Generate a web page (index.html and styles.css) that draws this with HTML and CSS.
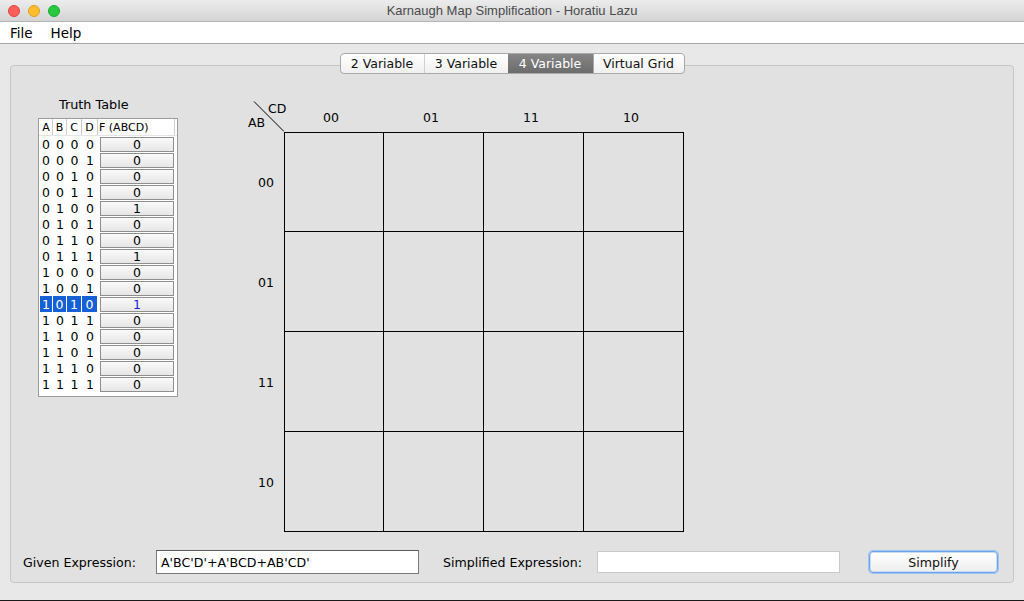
FILE: index.html
```html
<!DOCTYPE html>
<html>
<head>
<meta charset="utf-8">
<link rel="stylesheet" href="styles.css">
</head>
<body>
<div class="window">
  <div class="titlebar">
    <div class="lights">
      <span class="light red"></span>
      <span class="light yellow"></span>
      <span class="light green"></span>
    </div>
    <div class="title">Karnaugh Map Simplification - Horatiu Lazu</div>
  </div>
  <div class="menubar">
    <span class="menu">File</span>
    <span class="menu">Help</span>
  </div>
  <div class="content">
    <div class="tabs">
      <span class="tab">2 Variable</span>
      <span class="tab sep">3 Variable</span>
      <span class="tab active">4 Variable</span>
      <span class="tab">Virtual Grid</span>
    </div>
    <div class="panel">
      <div class="main">
        <div class="tt-section">
          <div class="tt-title">Truth Table</div>
          <div class="tt-box">
            <div class="tt-row tt-head">
              <span class="c a">A</span><span class="c b">B</span><span class="c cc">C</span><span class="c d">D</span><span class="c f">F (ABCD)</span>
            </div>
            <div class="tt-row"><span class="c a">0</span><span class="c b">0</span><span class="c cc">0</span><span class="c d">0</span><span class="c f"><span class="val">0</span></span></div>
            <div class="tt-row"><span class="c a">0</span><span class="c b">0</span><span class="c cc">0</span><span class="c d">1</span><span class="c f"><span class="val">0</span></span></div>
            <div class="tt-row"><span class="c a">0</span><span class="c b">0</span><span class="c cc">1</span><span class="c d">0</span><span class="c f"><span class="val">0</span></span></div>
            <div class="tt-row"><span class="c a">0</span><span class="c b">0</span><span class="c cc">1</span><span class="c d">1</span><span class="c f"><span class="val">0</span></span></div>
            <div class="tt-row"><span class="c a">0</span><span class="c b">1</span><span class="c cc">0</span><span class="c d">0</span><span class="c f"><span class="val">1</span></span></div>
            <div class="tt-row"><span class="c a">0</span><span class="c b">1</span><span class="c cc">0</span><span class="c d">1</span><span class="c f"><span class="val">0</span></span></div>
            <div class="tt-row"><span class="c a">0</span><span class="c b">1</span><span class="c cc">1</span><span class="c d">0</span><span class="c f"><span class="val">0</span></span></div>
            <div class="tt-row"><span class="c a">0</span><span class="c b">1</span><span class="c cc">1</span><span class="c d">1</span><span class="c f"><span class="val">1</span></span></div>
            <div class="tt-row"><span class="c a">1</span><span class="c b">0</span><span class="c cc">0</span><span class="c d">0</span><span class="c f"><span class="val">0</span></span></div>
            <div class="tt-row"><span class="c a">1</span><span class="c b">0</span><span class="c cc">0</span><span class="c d">1</span><span class="c f"><span class="val">0</span></span></div>
            <div class="tt-row sel"><span class="c a">1</span><span class="c b">0</span><span class="c cc">1</span><span class="c d">0</span><span class="c f"><span class="val">1</span></span></div>
            <div class="tt-row"><span class="c a">1</span><span class="c b">0</span><span class="c cc">1</span><span class="c d">1</span><span class="c f"><span class="val">0</span></span></div>
            <div class="tt-row"><span class="c a">1</span><span class="c b">1</span><span class="c cc">0</span><span class="c d">0</span><span class="c f"><span class="val">0</span></span></div>
            <div class="tt-row"><span class="c a">1</span><span class="c b">1</span><span class="c cc">0</span><span class="c d">1</span><span class="c f"><span class="val">0</span></span></div>
            <div class="tt-row"><span class="c a">1</span><span class="c b">1</span><span class="c cc">1</span><span class="c d">0</span><span class="c f"><span class="val">0</span></span></div>
            <div class="tt-row"><span class="c a">1</span><span class="c b">1</span><span class="c cc">1</span><span class="c d">1</span><span class="c f"><span class="val">0</span></span></div>
          </div>
        </div>
        <div class="kmap">
          <div class="corner">
            <svg class="diag" width="46" height="34" viewBox="0 0 46 34"><line x1="16" y1="3.5" x2="46" y2="33.5" stroke="#000" stroke-width="1"/></svg>
            <span class="lbl-cd">CD</span>
            <span class="lbl-ab">AB</span>
          </div>
          <div class="colhead">00</div>
          <div class="colhead">01</div>
          <div class="colhead">11</div>
          <div class="colhead">10</div>
          <div class="rowhead">00</div>
          <div class="cell t l"></div><div class="cell t"></div><div class="cell t"></div><div class="cell t"></div>
          <div class="rowhead">01</div>
          <div class="cell l"></div><div class="cell"></div><div class="cell"></div><div class="cell"></div>
          <div class="rowhead">11</div>
          <div class="cell l"></div><div class="cell"></div><div class="cell"></div><div class="cell"></div>
          <div class="rowhead">10</div>
          <div class="cell l"></div><div class="cell"></div><div class="cell"></div><div class="cell"></div>
        </div>
      </div>
      <div class="bottom">
        <label class="lbl lbl-given">Given Expression:</label>
        <div class="input given">A'BC'D'+A'BCD+AB'CD'</div>
        <label class="lbl lbl-simp">Simplified Expression:</label>
        <div class="input simp"></div>
        <button class="btn">Simplify</button>
      </div>
    </div>
  </div>
</div>
</body>
</html>
```

FILE: styles.css
```css
* { box-sizing: border-box; }
html, body { margin: 0; padding: 0; }
body {
  width: 1024px;
  height: 601px;
  overflow: hidden;
  background: #e8e8e8;
  font-family: "DejaVu Sans", Verdana, sans-serif;
  font-size: 12px;
  color: #000;
}
.window {
  width: 1024px;
  height: 601px;
  display: flex;
  flex-direction: column;
  border-bottom: 1px solid #1a1a1a;
}
.titlebar {
  height: 22px;
  flex: none;
  position: relative;
  background: linear-gradient(#ececec, #d4d4d4);
  border-bottom: 1px solid #b4b4b4;
  display: flex;
  align-items: center;
  justify-content: center;
}
.lights {
  position: absolute;
  left: 8px;
  top: 5px;
  display: flex;
  gap: 8px;
}
.light {
  width: 12px;
  height: 12px;
  border-radius: 50%;
  display: block;
}
.red { background: #fc5f57; border: 1px solid #e0443e; }
.yellow { background: #fdbc2e; border: 1px solid #dea123; }
.green { background: #28c840; border: 1px solid #1aab29; }
.title {
  font-family: "Liberation Sans", Arial, sans-serif;
  font-size: 13px;
  color: #4a4a4a;
}
.menubar {
  height: 22px;
  flex: none;
  background: #fff;
  border-bottom: 1px solid #a6a6a6;
  display: flex;
  align-items: center;
  padding-left: 10px;
  gap: 18px;
  font-size: 13.5px;
}
.content {
  flex: 1;
  display: flex;
  flex-direction: column;
  background: #e8e8e8;
}
.tabs {
  margin-top: 9px;
  align-self: center;
  display: flex;
  height: 21px;
  position: relative;
  z-index: 2;
  border: 1px solid #a9a9a9;
  border-radius: 4px;
  background: linear-gradient(#ffffff, #f0f0f0);
  overflow: hidden;
  margin-left: 0;
}
.tab {
  display: flex;
  align-items: center;
  justify-content: center;
  font-size: 12.5px;
  height: 19px;
  padding: 0;
  white-space: nowrap;
  color: #111;
}
.tab:nth-child(1) { width: 83px; }
.tab:nth-child(2) { width: 84px; border-left: 1px solid #d0d0d0; }
.tab:nth-child(3) { width: 85px; }
.tab:nth-child(4) { width: 91px; border-left: 1px solid #a9a9a9; }
.tab.active {
  background: linear-gradient(#858585, #6c6c6c);
  color: #fff;
}
.panel {
  margin: -9px 10px 0 10px;
  width: 1004px;
  height: 518px;
  border: 1px solid #c6c6c6;
  border-radius: 4px;
  background: #e1e1e1;
  display: flex;
  flex-direction: column;
  padding: 32px 0 8px 0;
}
.main {
  display: flex;
  height: 434px;
}
.tt-section {
  margin-left: 27px;
  width: 140px;
  display: flex;
  flex-direction: column;
}
.tt-title {
  height: 14px;
  line-height: 14px;
  padding-left: 21px;
  font-size: 12.8px;
}
.tt-box {
  margin-top: 6px;
  width: 140px;
  height: 279px;
  background: #fff;
  border: 1px solid #9c9c9c;
  padding-top: 0;
}
.tt-row {
  display: flex;
  height: 16px;
  align-items: center;
  font-size: 12.5px;
}
.tt-head {
  height: 17px;
  font-size: 11px;
  margin-bottom: 0;
  border-bottom: 1px solid #e4e4e4;
}
.c {
  display: flex;
  height: 100%;
  align-items: center;
  justify-content: center;
}
.a { width: 14px; }
.b { width: 14px; }
.cc { width: 15px; }
.d { width: 16px; }
.f { width: 78px; justify-content: flex-start; }
.tt-head .c { border-right: 1px solid #cfcfcf; }
.tt-head .a { padding-left: 1px; }
.tt-head .f { padding-left: 1px; border-right: 1px solid #cfcfcf; width: 77px; }
.val {
  margin-left: 2px;
  width: 74px;
  height: 15px;
  border: 1px solid #8f8f8f;
  background: linear-gradient(#fafafa, #e6e6e6);
  display: flex;
  align-items: center;
  justify-content: center;
  font-size: 12.5px;
  line-height: 13px;
}
.sel .a, .sel .b, .sel .cc, .sel .d {
  background: #1560d6;
  color: #fff;
  border-right: 1px solid #fff;
}
.sel .a { margin-left: 1px; width: 13px; }
.sel .val { color: #1a1ae0; }
.kmap {
  margin-left: 60px;
  display: grid;
  grid-template-columns: 46px repeat(4, 100px);
  grid-template-rows: 34px repeat(4, 100px);
}
.corner {
  position: relative;
}
.diag {
  position: absolute;
  left: 0;
  top: 0;
}
.lbl-cd {
  position: absolute;
  left: 30px;
  top: 3px;
  font-size: 12.5px;
}
.lbl-ab {
  position: absolute;
  left: 10px;
  top: 17px;
  font-size: 12.5px;
}
.colhead {
  display: flex;
  align-items: flex-end;
  justify-content: center;
  padding-bottom: 7px;
  padding-right: 6px;
  font-size: 12.5px;
}
.rowhead {
  display: flex;
  align-items: center;
  justify-content: flex-end;
  padding-right: 10px;
  padding-top: 0;
  font-size: 12.5px;
}
.cell {
  border-right: 1px solid #000;
  border-bottom: 1px solid #000;
}
.cell.t { border-top: 1px solid #000; }
.cell.l { border-left: 1px solid #000; }
.bottom {
  margin-top: 18px;
  height: 24px;
  display: flex;
  align-items: center;
  padding-left: 12px;
}
.lbl {
  font-size: 12.6px;
  display: block;
  white-space: nowrap;
}
.lbl-given { width: 133px; }
.lbl-simp { width: 154px; margin-left: 24px; }
.input {
  background: #fff;
  height: 24px;
  display: flex;
  align-items: center;
  padding-left: 4px;
  font-size: 12.6px;
}
.given {
  width: 263px;
  border: 1px solid #7a7a7a;
  border-top-color: #5a5a5a;
}
.simp {
  width: 243px;
  height: 22px;
  border: 1px solid #c9c9c9;
}
.btn {
  margin-left: 29px;
  width: 129px;
  height: 22px;
  border: 1px solid #6fa3e8;
  border-radius: 4px;
  background: linear-gradient(#ffffff, #eeeeee);
  box-shadow: 0 0 0 1px #9cc4f5, inset 0 0 0 1px #c9dcf5;
  font-family: "DejaVu Sans", Verdana, sans-serif;
  font-size: 12.6px;
  color: #111;
  padding: 0;
}
```
